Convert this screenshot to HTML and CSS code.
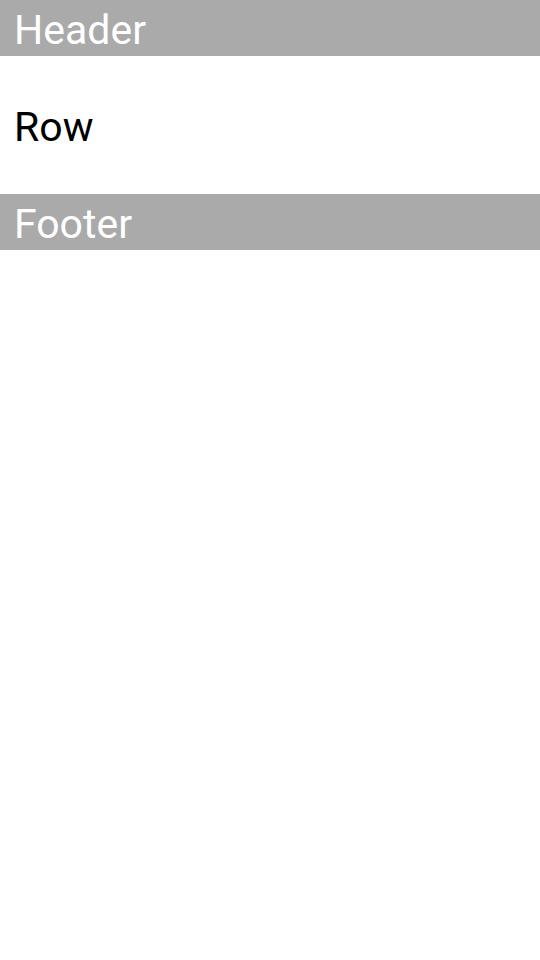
FILE: index.html
```html
<!DOCTYPE html>
<html>
<head>
<meta charset="utf-8">
<link rel="stylesheet" href="styles.css">
</head>
<body>
<div class="page">
  <div class="bar">Header</div>
  <div class="row">Row</div>
  <div class="bar">Footer</div>
</div>
</body>
</html>
```
FILE: styles.css
```css
html, body {
  margin: 0;
  padding: 0;
  background: #ffffff;
}
.page {
  display: flex;
  flex-direction: column;
  font-family: Roboto, "Noto Sans", sans-serif;
}
.bar {
  box-sizing: border-box;
  background: #aaaaaa;
  color: #ffffff;
  height: 56px;
  padding-top: 4px;
  line-height: 52px;
  font-size: 41px;
  padding-left: 14px;
}
.row {
  box-sizing: border-box;
  height: 138px;
  display: flex;
  align-items: center;
  padding-top: 4px;
  padding-left: 14px;
  font-size: 41px;
  color: #000000;
}
```
